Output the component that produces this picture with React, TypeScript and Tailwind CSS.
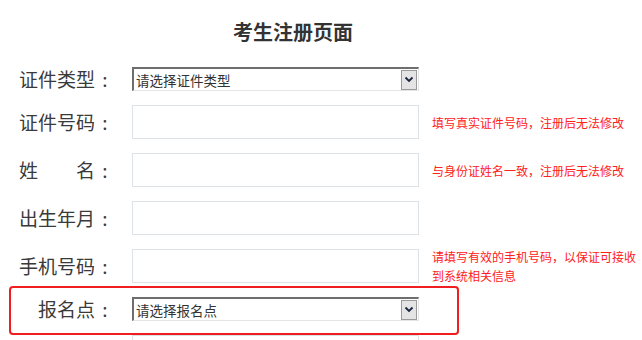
import React from "react";

function FakeSelect({ text }: { text: string }) {
  return (
    <div className="relative flex h-[24px] w-[287px] items-center border-t-2 border-l-2 border-b border-r border-t-[#6e6e6e] border-l-[#6e6e6e] border-b-[#e4e4e4] border-r-[#e4e4e4] bg-white">
      <span className="pl-[2px] text-[13.5px] leading-[20px] text-[#333]">{text}</span>
      <div className="ml-auto mr-[1px] flex h-[20px] w-[16px] items-center justify-center border border-[#9a9a9a] bg-[#e4e4e4]">
        <svg width="10" height="7" viewBox="0 0 10 7">
          <path d="M1.5 1.5 L5 5 L8.5 1.5" fill="none" stroke="#1b2440" strokeWidth="1.8" />
        </svg>
      </div>
    </div>
  );
}

function TextBox() {
  return <div className="h-[34px] w-[287px] border border-[#dde2e6] bg-white" />;
}

function Label({ children, spread }: { children: React.ReactNode; spread?: boolean }) {
  return (
    <div className="flex w-[109px] shrink-0 items-center justify-end text-[19px] leading-[24px] text-[#3a3a3a]">
      {spread ? (
        <div className="flex w-[76px] justify-between">{children}</div>
      ) : (
        <span>{children}</span>
      )}
      <span className="ml-[6px] w-[8px] text-center">:</span>
    </div>
  );
}

function Hint({ children }: { children: React.ReactNode }) {
  return (
    <div className="ml-[13px] w-[210px] text-[12px] leading-[19px] text-[#ff2020]">{children}</div>
  );
}

export default function App() {
  return (
    <div
      className="h-[340px] w-[642px] overflow-hidden bg-white"
      style={{ fontFamily: '"Noto Sans CJK SC", "Microsoft YaHei", sans-serif' }}
    >
      <h1 className="w-[586px] pt-[19px] text-center text-[20px] font-bold leading-[26px] text-[#333]">
        考生注册页面
      </h1>
      <div className="mt-[22px] flex flex-col gap-[14px]">
        <div className="flex h-[24px] items-center">
          <Label>证件类型</Label>
          <div className="ml-[23px]">
            <FakeSelect text="请选择证件类型" />
          </div>
        </div>
        <div className="flex h-[34px] items-center">
          <Label>证件号码</Label>
          <div className="ml-[23px]">
            <TextBox />
          </div>
          <Hint>填写真实证件号码，注册后无法修改</Hint>
        </div>
        <div className="flex h-[34px] items-center">
          <Label spread>
            <span>姓</span>
            <span>名</span>
          </Label>
          <div className="ml-[23px]">
            <TextBox />
          </div>
          <Hint>与身份证姓名一致，注册后无法修改</Hint>
        </div>
        <div className="flex h-[34px] items-center">
          <Label>出生年月</Label>
          <div className="ml-[23px]">
            <TextBox />
          </div>
        </div>
        <div className="flex h-[34px] items-center">
          <Label>手机号码</Label>
          <div className="ml-[23px]">
            <TextBox />
          </div>
          <Hint>请填写有效的手机号码，以保证可接收到系统相关信息</Hint>
        </div>
        <div className="relative flex h-[24px] items-center">
          <div className="pointer-events-none absolute left-[9px] top-[-11px] h-[49px] w-[450px] rounded-[4px] border-2 border-[#f01e1e]" />
          <Label>报名点</Label>
          <div className="ml-[23px]">
            <FakeSelect text="请选择报名点" />
          </div>
        </div>
        <div className="flex h-[34px] items-center">
          <div className="w-[109px] shrink-0" />
          <div className="ml-[23px]">
            <TextBox />
          </div>
        </div>
      </div>
    </div>
  );
}
